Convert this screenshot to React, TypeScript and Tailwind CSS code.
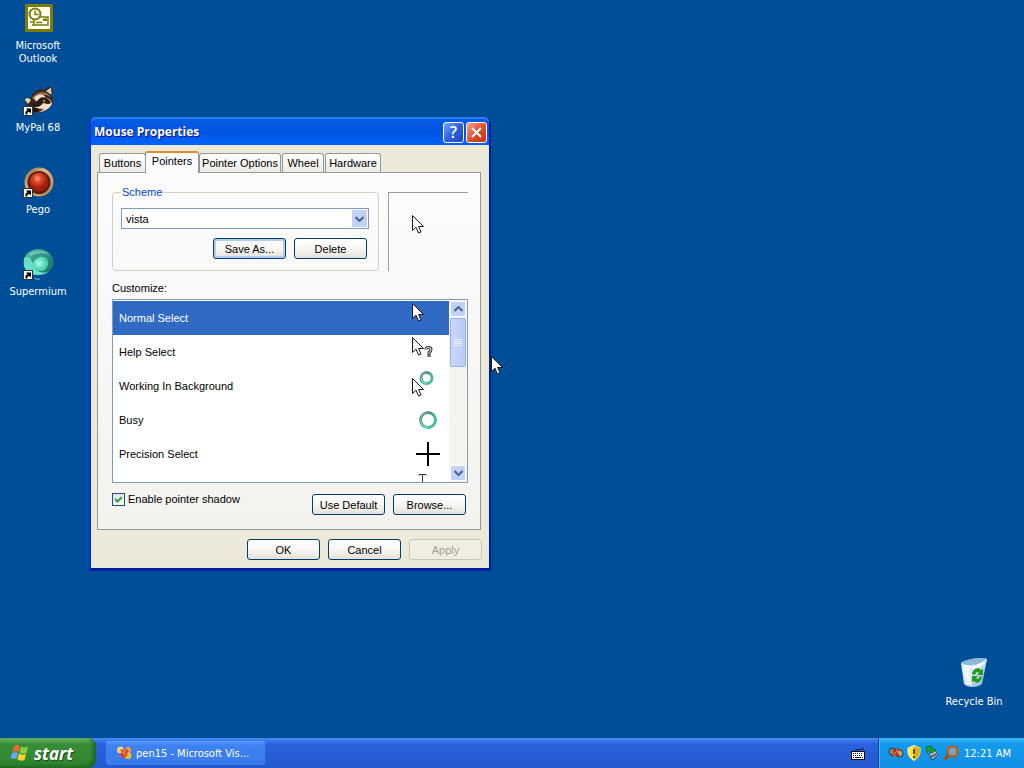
import React, { useState } from 'react';

const tahoma = "font-['DejaVu_Sans_Condensed','DejaVu_Sans',sans-serif]";

const Arrow: React.FC<{ x?: number; y?: number; fill?: string }> = ({ x = 0, y = 0, fill = '#fff' }) => (
  <path
    transform={`translate(${x} ${y})`}
    d="M.5 .5V15.5L4 12.2L6.5 18L9 17L6.6 11.5H11.5Z"
    fill={fill}
    stroke="#1a1a1a"
    strokeWidth="1"
  />
);

const Shortcut: React.FC = () => (
  <g>
    <rect x="1.500" y="21.500" width="9" height="9" fill="#fff" stroke="#333" />
    <path d="M3.500 29.500C3 26.500 4 25.500 5.500 25.500L4 23.500H9V28.500L7.300 27C5.500 27 5 28 5.500 29.500Z" fill="#000" />
  </g>
);

const OutlookIcon: React.FC = () => (
  <svg width="32" height="32" viewBox="0 0 32 32" aria-hidden="true">
    <rect x="3" y="1" width="28" height="28" fill="#7d7c08" />
    <rect x="6" y="4" width="22" height="22" fill="#fffff0" />
    <path d="M14 14H26V22H12V17" fill="#fffff0" stroke="#7d7c08" strokeWidth="1.500" />
    <circle cx="13" cy="11" r="5.500" fill="#fffff0" stroke="#7d7c08" strokeWidth="2" />
    <path d="M13 7.500V11.500H16.500" fill="none" stroke="#7d7c08" strokeWidth="1.500" />
    <rect x="21" y="15.500" width="4" height="2.500" fill="#7d7c08" />
    <path d="M14 19.500H20M8 19H12M10 22H12" fill="none" stroke="#7d7c08" strokeWidth="1.500" />
  </svg>
);

const RaccoonIcon: React.FC = () => (
  <svg width="32" height="32" viewBox="0 0 32 32" aria-hidden="true">
    <path d="M3 16C2 12 5 11 8 14L11 9C15 4 20 3 23 5C24 2 28 0 30 3C31 8 30 12 31 17C30 23 23 28 14 28C8 26 5 21 3 16Z" fill="#38261b" />
    <path d="M24 6L29 2.500L29.500 10Z" fill="#d8d0bd" />
    <path d="M3 15C4 12 7 13 9 15L6 19Z" fill="#ded2bd" />
    <path d="M10 13C15 6 25 5 29 13C25 9 20 9 17 14L14 16Z" fill="#9b7350" />
    <path d="M12 13C17 8 22 9 24 13C27 13 30 16 30 19C27 25 19 28 14 27C15 25 15 24 13 22C16 19 15 17 12 13Z" fill="#efe2c9" />
    <path d="M18 13C22 11 28 14 29 18C26 20 23 18 21 18C18 23 13 23 9 20L14 17Z" fill="#2b1b15" />
    <circle cx="22" cy="16" r="1.200" fill="#bd8145" />
    <path d="M12 23L22 24L18 27L13 27Z" fill="#6c4028" />
    <ellipse cx="14" cy="25" rx="3" ry="2" fill="#171312" />
    <Shortcut />
  </svg>
);

const PegoIcon: React.FC = () => (
  <svg width="32" height="32" viewBox="0 0 32 32" aria-hidden="true">
    <defs>
      <radialGradient id="pego-ball" cx="42%" cy="32%">
        <stop offset="0" stopColor="#ff9d87" />
        <stop offset="0.400" stopColor="#e04a2e" />
        <stop offset="1" stopColor="#a01e0c" />
      </radialGradient>
      <linearGradient id="pego-rim" x2="1" y2="1">
        <stop offset="0" stopColor="#7b5a3c" />
        <stop offset="0.400" stopColor="#dcbb84" />
        <stop offset="1" stopColor="#a9824f" />
      </linearGradient>
    </defs>
    <circle cx="17" cy="15" r="14.500" fill="url(#pego-rim)" />
    <circle cx="17" cy="15.500" r="11.500" fill="#5c1a10" />
    <circle cx="17" cy="15" r="9.500" fill="url(#pego-ball)" />
    <Shortcut />
  </svg>
);

const SupermiumIcon: React.FC = () => (
  <svg width="32" height="32" viewBox="0 0 32 32" aria-hidden="true">
    <defs>
      <linearGradient id="sup-top" x2="1" y2="1">
        <stop offset="0" stopColor="#54bca8" />
        <stop offset="0.500" stopColor="#2d9080" />
        <stop offset="1" stopColor="#14705f" />
      </linearGradient>
      <radialGradient id="sup-mid" cx="40%" cy="45%">
        <stop offset="0" stopColor="#a5ffe7" />
        <stop offset="1" stopColor="#48ceb0" />
      </radialGradient>
    </defs>
    <ellipse cx="16.500" cy="13" rx="15" ry="13" fill="url(#sup-top)" />
    <path d="M2 10C5 5 9 9 11 15C13 22 21 26 27 22C22 28 5 28 2 17Z" fill="#6be0c8" />
    <path d="M11 14C14 7 22 6 25 10C28 14 25 22 19 22C14 22 11 19 11 14Z" fill="url(#sup-mid)" />
    <path d="M7 5C13 0 24 1 28 6C21 3 13 4 8 8Z" fill="#8fd6c6" opacity="0.600" />
    <path d="M12 29Q14 31 18 30" fill="none" stroke="#54c9c4" />
    <Shortcut />
  </svg>
);

const RecycleIcon: React.FC = () => (
  <svg width="32" height="32" viewBox="0 0 32 32" aria-hidden="true">
    <defs>
      <linearGradient id="bin" x2="1" y2="1">
        <stop offset="0" stopColor="#f5fcff" />
        <stop offset="0.500" stopColor="#cfe4f5" />
        <stop offset="1" stopColor="#7eafd8" />
      </linearGradient>
    </defs>
    <path d="M3 6C8 3 22 0 29 2L24 27C19 31 10 31 6 27Z" fill="url(#bin)" />
    <path d="M3 6C9 1 24 0 29 2C27 8 22 10 16 10C9 10 4 9 3 6Z" fill="#8bb7d8" />
    <path d="M3 6C7 11 12 10 17 12C22 10 27 8 29 2C25 5 21 7 17 8C12 9 7 8 3 6Z" fill="#f3faff" />
    <path d="M6 10L8 27L14 29L11 12Z" fill="#fff" opacity="0.600" />
    <g fill="#239a18">
      <path d="M14 17C15 11 21 10 23 13L25 12V18H19L21 16C19 14 18 15 17 18Z" />
      <path d="M24 20C23 26 18 27 16 24L14 25V19H20L18 21C20 23 21 22 22 19Z" />
    </g>
  </svg>
);

const FlagIcon: React.FC = () => (
  <svg width="20" height="18" viewBox="0 0 20 18" aria-hidden="true">
    <path d="M4 2Q7 0 10 2L8.500 8Q5.500 6.500 2.500 8Z" fill="#ef6836" />
    <path d="M11 2.500Q14 4.500 18 2.500L16.500 9Q13 10.500 9.500 8.500Z" fill="#8bd13e" />
    <path d="M2 9Q5 7.500 8 9L6.500 15Q3.500 13.500 .5 15Z" fill="#6aa4fc" />
    <path d="M9 9.500Q12.500 11.500 16 10L14.500 16Q11 17.500 7.500 15.500Z" fill="#ffd12f" />
  </svg>
);

const VisualStudioIcon: React.FC = () => (
  <svg width="16" height="16" viewBox="0 0 16 16" aria-hidden="true">
    <circle cx="4.500" cy="5" r="3.500" fill="#f2d27c" />
    <circle cx="12" cy="5" r="3" fill="#e9a63a" />
    <circle cx="12" cy="10.500" r="3.500" fill="#e3c13b" />
    <circle cx="4.500" cy="10.500" r="2.500" fill="#4f80dd" />
    <path d="M4 10L10 3L13 6L7 13Z" fill="#d93b1d" />
    <path d="M4 5L7 4L12 10L9 13Z" fill="#e8592c" />
    <path d="M7 8L11 4" stroke="#ffb08a" />
  </svg>
);

const KeyboardIcon: React.FC = () => (
  <svg width="14" height="14" viewBox="0 0 14 14" aria-hidden="true">
    <path d="M5 5V3.500H12V1.500" fill="none" stroke="#111" strokeDasharray="2 1" />
    <rect x="0.500" y="5.500" width="13" height="8" fill="#fff" stroke="#111" />
    <path d="M2 7.500H12M2 9.500H12" stroke="#111" strokeDasharray="1 1" />
    <path d="M2 11.500H12" stroke="#111" strokeDasharray="1 1 6 1" />
  </svg>
);

const TrayIcons: React.FC = () => (
  <div className="flex items-center gap-[3px]">
    <svg width="16" height="16" viewBox="0 0 16 16" aria-hidden="true">
      <circle cx="4.500" cy="6.500" r="3.500" fill="#8b9170" stroke="#302d22" />
      <circle cx="11.500" cy="8.500" r="3.500" fill="#b5ad86" stroke="#302d22" />
      <path d="M3.500 11.500L11 3.500M5 5L11 11" stroke="#c93212" strokeWidth="2.500" />
      <path d="M5 10L10 5" stroke="#ff8b56" />
    </svg>
    <svg width="14" height="16" viewBox="0 0 14 16" aria-hidden="true">
      <path d="M7 .5L13 3V8Q12 13 7 15.500Q2 13 1 8V3Z" fill="#ffe53b" stroke="#fff6c0" />
      <path d="M7 1L13 3V8Q12 13 7 15Z" fill="#e9ae12" />
      <path d="M7 4V9M7 11V13" stroke="#222" strokeWidth="1.500" />
    </svg>
    <svg width="16" height="16" viewBox="0 0 16 16" aria-hidden="true">
      <path d="M5 9L11 5L14 10L8 15Z" fill="#b2c4cd" stroke="#33454e" />
      <path d="M7 12L12 9" stroke="#4a5d67" strokeWidth="2" />
      <path d="M2 2L8 1L7 3L12 5L8 8L5 5L3 8Z" fill="#23a229" stroke="#0b6618" strokeWidth="0.700" />
    </svg>
    <svg width="16" height="16" viewBox="0 0 16 16" aria-hidden="true">
      <path d="M6 10L1.500 14.500" stroke="#a74b0d" strokeWidth="3" />
      <circle cx="9.500" cy="6.500" r="5" fill="#5dbaf1" stroke="#b85d19" strokeWidth="2.500" />
      <circle cx="9.500" cy="6.500" r="2" fill="none" stroke="#cb7129" />
    </svg>
  </div>
);

const Ring: React.FC<{ id: string; cx: number; cy: number; r: number }> = ({ id, cx, cy, r }) => (
  <g fill="none">
    <defs>
      <linearGradient id={id} x1="0" y1="0" x2="1" y2="1">
        <stop offset="0" stopColor="#9db8b5" />
        <stop offset="0.300" stopColor="#4a8f86" />
        <stop offset="0.600" stopColor="#3cc0a2" />
        <stop offset="1" stopColor="#54b59f" />
      </linearGradient>
    </defs>
    <circle cx={cx} cy={cy} r={r} fill="#fff" stroke={`url(#${id})`} strokeWidth="3" />
    <path d={`M${cx - r} ${cy}A${r} ${r} 0 0 0 ${cx} ${cy + r}`} stroke="#8fe6d0" />
  </g>
);

const Chevron: React.FC<{ up?: boolean }> = ({ up }) => (
  <svg width="9" height="6" viewBox="0 0 9 6" aria-hidden="true">
    <path d={up ? 'M.5 5L4.500 1L8.500 5' : 'M.5 1L4.500 5L8.500 1'} fill="none" stroke="#4d6185" strokeWidth="2" />
  </svg>
);

const desktopIcons = [
  { label: 'Microsoft Outlook', icon: <OutlookIcon /> },
  { label: 'MyPal 68', icon: <RaccoonIcon /> },
  { label: 'Pego', icon: <PegoIcon /> },
  { label: 'Supermium', icon: <SupermiumIcon /> },
];

const cursors = [
  { name: 'Normal Select', art: <Arrow y={2} /> },
  {
    name: 'Help Select',
    art: (
      <g>
        <Arrow y={2} fill="#f4f4f4" />
        <path d="M14 14.500Q14 12.500 16.500 12.500Q19 12.500 19 14.500Q19 16 17 17.500V22" fill="none" stroke="#333" strokeWidth="3" />
        <path d="M14 14.500Q14 12.500 16.500 12.500Q19 12.500 19 14.500Q19 16 17 17.500V19M17 20V21.500" fill="none" stroke="#fff" strokeWidth="1" />
      </g>
    ),
  },
  {
    name: 'Working In Background',
    art: (
      <g>
        <Ring id="ring-small" cx={14.5} cy={9} r={5.5} />
        <Arrow y={9} />
      </g>
    ),
  },
  { name: 'Busy', art: <Ring id="ring-large" cx={16} cy={17} r={7.5} /> },
  { name: 'Precision Select', art: <path d="M16 5V29M4 17H28" stroke="#000" strokeWidth="2" /> },
];

const tabs = [
  { name: 'Buttons', width: 'w-[47px]' },
  { name: 'Pointers', width: 'w-[54px]' },
  { name: 'Pointer Options', width: 'w-[82px]' },
  { name: 'Wheel', width: 'w-[42px]' },
  { name: 'Hardware', width: 'w-[56px]' },
];

interface XpButtonProps {
  children: React.ReactNode;
  focused?: boolean;
  disabled?: boolean;
}

const XpButton: React.FC<XpButtonProps> = ({ children, focused, disabled }) => (
  <button
    type="button"
    disabled={disabled}
    className={`h-[21px] w-[73px] whitespace-nowrap rounded-[3px] border leading-4 ${
      disabled
        ? 'border-[#c9c7ba] bg-[#f0eee0] text-[#a1a192]'
        : 'border-[#003c74] bg-linear-to-b from-white via-[#f8f7f4] to-[#e4e1d8]'
    } ${focused ? 'shadow-[inset_0_0_0_2px_#b4cbf0]' : ''}`}
  >
    {children}
  </button>
);

const MouseProperties: React.FC = () => {
  const [tab, setTab] = useState('Pointers');
  const [selected, setSelected] = useState('Normal Select');

  return (
    <section
      aria-label="Mouse Properties"
      className="absolute left-[89px] top-[117px] w-[402px] rounded-t-[7px] border-x-2 border-b-[3px] border-[#0831d9] border-b-[#001ea0] border-r-[#001ea0] bg-[#0054e3] font-['Liberation_Sans',Arial,sans-serif] text-[11px] leading-[14px] text-black"
    >
      <header className="flex h-7 items-center justify-between rounded-t-[5px] bg-linear-to-b from-[#0a5be0] via-[#0054e3] to-[#0063fb] pl-[3px] pr-[2px] pt-[2px] shadow-[inset_0_2px_1px_#2a80f5]">
        <h1 className="font-['Open_Sans',sans-serif] text-[12px] font-bold text-white [text-shadow:1px_1px_#0f1089]">Mouse Properties</h1>
        <div className="flex gap-[2px]">
          <button type="button" aria-label="Help" className="flex size-[21px] items-center justify-center rounded-[3px] border border-white bg-linear-to-br from-[#7aa5f7] via-[#2c60e0] to-[#1d48c0] font-['Open_Sans',sans-serif] text-[16px] font-semibold text-white">
            ?
          </button>
          <button type="button" aria-label="Close" className="flex size-[21px] items-center justify-center rounded-[3px] border border-white bg-linear-to-br from-[#f0a08a] via-[#e2512c] to-[#bd3414]">
            <svg width="13" height="13" viewBox="0 0 13 13" aria-hidden="true">
              <path d="M2 2L11 11M11 2L2 11" stroke="#fff" strokeWidth="2" />
            </svg>
          </button>
        </div>
      </header>

      <div className="bg-[#ece9d8] pb-2 pl-[6px] pr-[7px] pt-[6px]">
        <div role="tablist" className="relative flex items-end pl-[2px]">
          {tabs.map(({ name, width }) => (
            <button
              key={name}
              type="button"
              role="tab"
              aria-selected={tab === name}
              onClick={() => setTab(name)}
              className={`whitespace-nowrap ${width} ${
                tab === name
                  ? 'relative z-10 -mb-px -ml-px h-[22px] rounded-t-[3px] border-x border-t-2 border-[#919b9c] border-t-[#e68b2c] bg-[#fcfcfe] pb-1'
                  : 'mr-px h-[19px] rounded-t-[3px] border border-b-0 border-[#919b9c] bg-linear-to-b from-white to-[#ecebe6] first:mr-0'
              }`}
            >
              {name}
            </button>
          ))}
        </div>

        <div className="mr-px border border-[#919b9c] bg-linear-to-b from-[#fcfcfe] to-[#f3f2ed] pb-[14px] pl-[14px] pr-3 pt-3">
          <div className="flex gap-[9px]">
            <fieldset className="min-w-0 flex-1 rounded-[4px] border border-[#d0d0bf] pb-[11px] pl-2 pr-[9px] pt-[9px]">
              <legend className="px-px text-[#0046d5]">Scheme</legend>
              <div className="relative">
                <select aria-label="Scheme" className="block h-[21px] w-full appearance-none border border-[#7f9db9] bg-white pl-1 leading-[14px]">
                  <option>vista</option>
                </select>
                <span className="pointer-events-none absolute bottom-[2px] right-[2px] top-[2px] flex w-[15px] items-center justify-center rounded-[1px] bg-[#c1d1f9]">
                  <Chevron />
                </span>
              </div>
              <div className="mt-[9px] flex justify-end gap-2 pr-[2px]">
                <XpButton focused>Save As...</XpButton>
                <XpButton>Delete</XpButton>
              </div>
            </fieldset>
            <div className="mt-[7px] w-20 border-l border-t border-[#9d9d9a] pl-[23px] pt-[22px]">
              <svg width="14" height="20" viewBox="0 0 14 20" aria-hidden="true">
                <Arrow />
              </svg>
            </div>
          </div>

          <h2 className="mb-1 mt-[10px]">Customize:</h2>
          <div className="flex h-[184px] border border-[#7f9db9] bg-white">
            <div className="min-w-0 flex-1 overflow-hidden pt-px">
              <ul role="listbox" aria-label="Customize">
                {cursors.map((cursor) => (
                  <li
                    key={cursor.name}
                    role="option"
                    aria-selected={selected === cursor.name}
                    onClick={() => setSelected(cursor.name)}
                    className={`flex h-[34px] items-center justify-between pl-[6px] pr-[5px] ${
                      selected === cursor.name ? 'bg-[#316ac5] text-white' : ''
                    }`}
                  >
                    <span>{cursor.name}</span>
                    <svg width="32" height="34" viewBox="0 0 32 34" aria-hidden="true">
                      {cursor.art}
                    </svg>
                  </li>
                ))}
              </ul>
              {/* top of the next row's I-beam, cut by the list edge */}
              <svg className="ml-auto mr-[5px] block" width="32" height="11" viewBox="0 0 32 11" aria-hidden="true">
                <path d="M7 4.500V3.500H14V4.500M10.500 4V11" fill="none" stroke="#333" />
              </svg>
            </div>
            <div className="flex w-[18px] flex-col gap-px bg-[#f5f4ee] p-px">
              <button type="button" aria-label="Scroll up" className="flex h-4 items-center justify-center rounded-[2px] border border-white bg-[#c1d1f9]">
                <Chevron up />
              </button>
              <div className="flex h-[49px] flex-col items-center justify-center gap-px rounded-[2px] border border-[#98b1e4] bg-linear-to-r from-[#c9d7fc] to-[#b9cbf8]">
                <i className="h-px w-2 bg-[#eef4fe]" />
                <i className="h-px w-2 bg-[#eef4fe]" />
                <i className="h-px w-2 bg-[#eef4fe]" />
                <i className="h-px w-2 bg-[#eef4fe]" />
              </div>
              <button type="button" aria-label="Scroll down" className="mt-auto flex h-4 items-center justify-center rounded-[2px] border border-white bg-[#c1d1f9]">
                <Chevron />
              </button>
            </div>
          </div>

          <div className="mt-[9px] flex items-start justify-between">
            <label className="flex items-center gap-[3px]">
              <span className="relative flex">
                <input type="checkbox" defaultChecked className="size-[13px] appearance-none border border-[#1c5180] bg-linear-to-br from-[#dcdcd7] to-white" />
                <svg className="pointer-events-none absolute left-[3px] top-[3px]" width="7" height="7" viewBox="0 0 7 7" aria-hidden="true">
                  <path d="M0 3L2.500 5.500L7 1" fill="none" stroke="#3f9a3a" strokeWidth="2" />
                </svg>
              </span>
              Enable pointer shadow
            </label>
            <div className="flex gap-2 pr-[2px] pt-[2px]">
              <XpButton>Use Default</XpButton>
              <XpButton>Browse...</XpButton>
            </div>
          </div>
        </div>

        <div className="mt-[9px] flex justify-end gap-2">
          <XpButton>OK</XpButton>
          <XpButton>Cancel</XpButton>
          <XpButton disabled>Apply</XpButton>
        </div>
      </div>
    </section>
  );
};

const Taskbar: React.FC = () => (
  <footer className="flex h-[30px] items-stretch bg-linear-to-b from-[#4a8cf5] via-[#2a62de] via-20% to-[#2358cf]">
    <button type="button" className="flex w-24 items-center gap-1 rounded-r-[8px] bg-linear-to-b from-[#6abb66] via-[#388e37] via-20% to-[#2f852f] pl-[10px] shadow-[inset_-3px_-2px_4px_#1c6420]">
      <FlagIcon />
      <span className="font-['Open_Sans',sans-serif] text-[17px] font-bold italic text-white [text-shadow:1px_1px_1px_#184a18]">start</span>
    </button>
    <button type="button" className="my-[3px] ml-[10px] flex w-[159px] items-center gap-1 rounded-[2px] bg-linear-to-b from-[#5a9bff] via-[#3c81f3] via-20% to-[#3a7bea] pl-[10px] text-[11px] text-white">
      <VisualStudioIcon />
      <span className="whitespace-nowrap">pen15 - Microsoft Vis...</span>
    </button>
    <div className="ml-auto flex items-center pr-[13px]">
      <KeyboardIcon />
    </div>
    <div className="flex w-[146px] items-center justify-between border-l border-[#0d3e9b] bg-linear-to-b from-[#3cb6f8] via-[#129aed] via-20% to-[#1390e6] pl-[9px] pr-[13px] shadow-[inset_1px_0_#41c3f8]">
      <TrayIcons />
      <time className="whitespace-nowrap text-[11px] text-white">12:21 AM</time>
    </div>
  </footer>
);

const App: React.FC = () => {
  return (
    <div className={`relative flex h-screen flex-col overflow-hidden bg-[#004e98] text-[11px] leading-[13px] text-white ${tahoma}`}>
      <main className="flex flex-1 justify-between">
        <nav aria-label="Desktop" className="flex w-[76px] flex-col pt-[3px]">
          {desktopIcons.map((item) => (
            <a key={item.label} href="#" className="flex h-[82px] flex-col items-center gap-1 px-2 text-center">
              {item.icon}
              <span>{item.label}</span>
            </a>
          ))}
        </nav>
        <a href="#" className="mb-[30px] mr-3 flex w-[76px] flex-col items-center gap-[6px] self-end text-center">
          <RecycleIcon />
          <span className="whitespace-nowrap">Recycle Bin</span>
        </a>
      </main>
      <MouseProperties />
      <svg className="pointer-events-none absolute left-[491px] top-[356px]" width="14" height="20" viewBox="0 0 14 20" aria-hidden="true">
        <Arrow />
      </svg>
      <Taskbar />
    </div>
  );
};

export default App;
